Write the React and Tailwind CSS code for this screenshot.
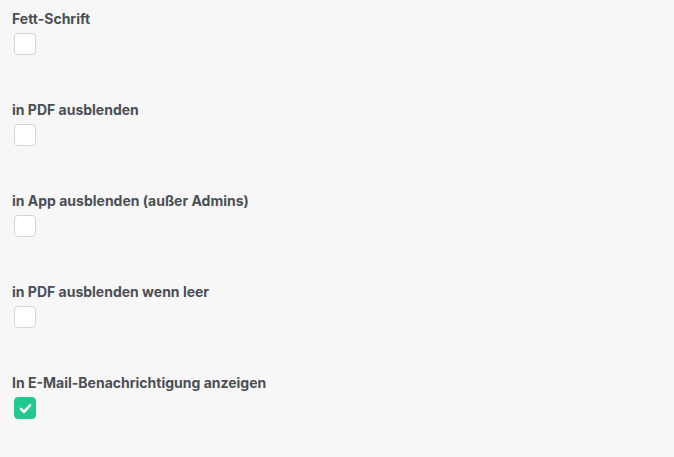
import React, { useState } from 'react';

const OPTIONS = [
  { id: 'bold', label: 'Fett-Schrift', checked: false },
  { id: 'hidePdf', label: 'in PDF ausblenden', checked: false },
  { id: 'hideApp', label: 'in App ausblenden (außer Admins)', checked: false },
  { id: 'hidePdfEmpty', label: 'in PDF ausblenden wenn leer', checked: false },
  { id: 'email', label: 'In E-Mail-Benachrichtigung anzeigen', checked: true },
];

const Checkbox = ({ checked, onChange }) => (
  <button
    type="button"
    onClick={onChange}
    className={`ml-[2px] mt-[3px] flex h-[22px] w-[22px] items-center justify-center rounded-[4px] border ${
      checked ? 'border-[#20c98f] bg-[#20c98f]' : 'border-[#d3d6da] bg-white'
    }`}
  >
    {checked && (
      <svg viewBox="0 0 16 16" className="h-[15px] w-[15px]" fill="none" stroke="white" strokeWidth="2.8" strokeLinecap="round" strokeLinejoin="round">
        <path d="M3.2 8.4l3.2 3.2L12.8 4.6" />
      </svg>
    )}
  </button>
);

export default function App() {
  const [values, setValues] = useState(() =>
    Object.fromEntries(OPTIONS.map(o => [o.id, o.checked]))
  );

  const toggle = (id) => setValues(prev => ({ ...prev, [id]: !prev[id] }));

  return (
    <div
      className="min-h-[457px] bg-[#f7f7f7] pl-3 pt-[8px]"
      style={{ fontFamily: 'Inter, "Liberation Sans", sans-serif' }}
    >
      {OPTIONS.map(opt => (
        <div key={opt.id} className="mb-[44px]">
          <div className="text-[14px] leading-[22px] font-bold text-[#4a4f55]">{opt.label}</div>
          <Checkbox checked={values[opt.id]} onChange={() => toggle(opt.id)} />
        </div>
      ))}
    </div>
  );
}
